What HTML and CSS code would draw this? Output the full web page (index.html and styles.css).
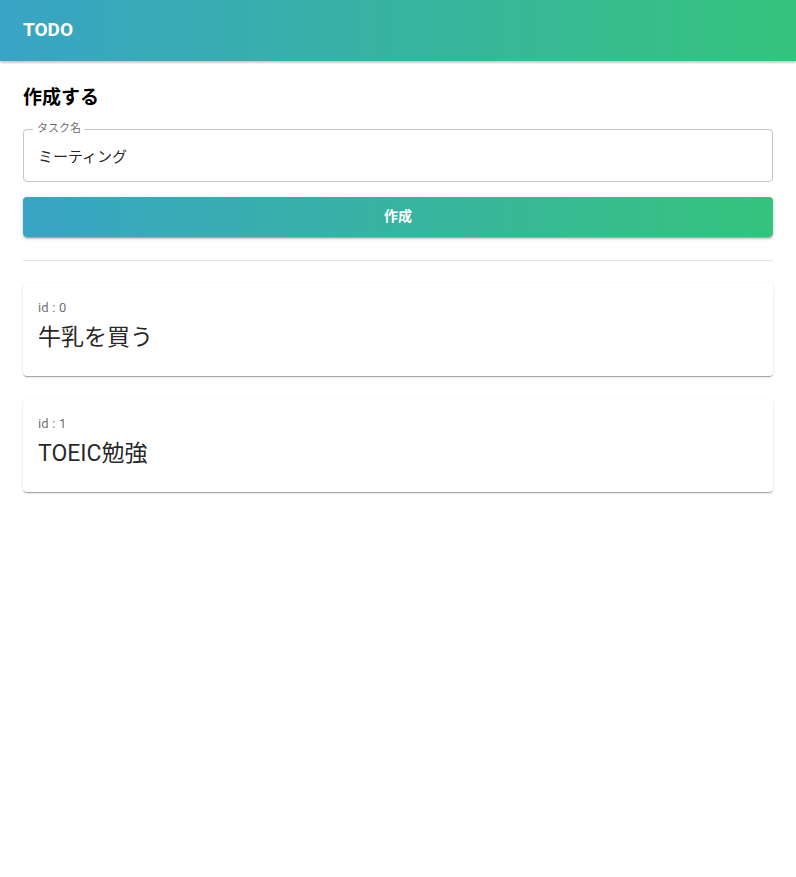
FILE: index.html
```html
<!DOCTYPE html>
<html lang="ja">
<head>
    <meta charset="UTF-8">
    <meta name="viewport" content="width=device-width, initial-scale=1.0">
    <title>TODO</title>
    <link rel="stylesheet" href="styles.css">
</head>
<body>

    <header class="app-bar">
        <span class="app-title">TODO</span>
    </header>

    <main class="content">
        <h2 class="section-title">作成する</h2>

        <div class="field">
            <label class="field-label" for="task">タスク名</label>
            <input class="field-input" id="task" type="text" value="ミーティング">
        </div>

        <button class="btn">作成</button>

        <hr class="divider">

        <div class="card-list">
            <div class="card">
                <div class="card-id">id : 0</div>
                <div class="card-name">牛乳を買う</div>
            </div>
            <div class="card">
                <div class="card-id">id : 1</div>
                <div class="card-name">TOEIC勉強</div>
            </div>
        </div>
    </main>

</body>
</html>
```

FILE: styles.css
```css
/* Basic Reset */
* {
    margin: 0;
    padding: 0;
    box-sizing: border-box;
}

body {
    font-family: Roboto, "Noto Sans CJK JP", sans-serif;
    color: rgba(0, 0, 0, 0.87);
    background: #fff;
}

/* Header */
.app-bar {
    height: 61px;
    padding: 0 23px 2px;
    display: flex;
    align-items: center;
    background: linear-gradient(to right, #39a4c5, #36c37d);
    box-shadow: 0 1px 3px rgba(0, 0, 0, 0.2), 0 2px 2px rgba(0, 0, 0, 0.1);
}

.app-title {
    color: #fff;
    font-size: 19px;
    font-weight: 700;
}

.content {
    padding: 24px 23px;
}

.section-title {
    font-size: 19px;
    font-weight: 700;
    line-height: 26px;
    margin-bottom: 18px;
    color: #000;
}

/* Outlined text field */
.field {
    position: relative;
    height: 53px;
    border: 1px solid #c4c4c4;
    border-radius: 4px;
}

.field-label {
    position: absolute;
    top: -8px;
    left: 9px;
    padding: 0 4px;
    background: #fff;
    font-size: 11px;
    line-height: 14px;
    color: rgba(0, 0, 0, 0.6);
}

.field-input {
    width: 100%;
    height: 100%;
    border: none;
    outline: none;
    padding: 0 14px;
    font-family: inherit;
    font-size: 15px;
    color: rgba(0, 0, 0, 0.87);
    background: transparent;
}

.btn {
    display: flex;
    align-items: center;
    justify-content: center;
    width: 100%;
    height: 40px;
    margin-top: 15px;
    padding-bottom: 5px;
    border: none;
    border-radius: 4px;
    background: linear-gradient(to right, #39a4c5, #36c37d);
    color: #fff;
    font-family: inherit;
    font-size: 14px;
    font-weight: 700;
    cursor: pointer;
    box-shadow: 0 3px 1px -2px rgba(0, 0, 0, 0.2), 0 2px 2px 0 rgba(0, 0, 0, 0.14), 0 1px 5px 0 rgba(0, 0, 0, 0.12);
}

.divider {
    border: none;
    border-top: 1px solid #e0e0e0;
    margin: 23px 0 22px;
}

/* Task cards */
.card-list {
    display: flex;
    flex-direction: column;
    gap: 23px;
}

.card {
    height: 93px;
    padding: 17px 15px;
    border-radius: 4px;
    background: #fff;
    box-shadow: 0 2px 1px -1px rgba(0, 0, 0, 0.2), 0 1px 1px 0 rgba(0, 0, 0, 0.14), 0 1px 3px 0 rgba(0, 0, 0, 0.12);
}

.card-id {
    font-size: 13px;
    line-height: 16px;
    letter-spacing: 0.2px;
    color: rgba(0, 0, 0, 0.6);
}

.card-name {
    margin-top: 7px;
    font-size: 23px;
    line-height: 30px;
}
```
